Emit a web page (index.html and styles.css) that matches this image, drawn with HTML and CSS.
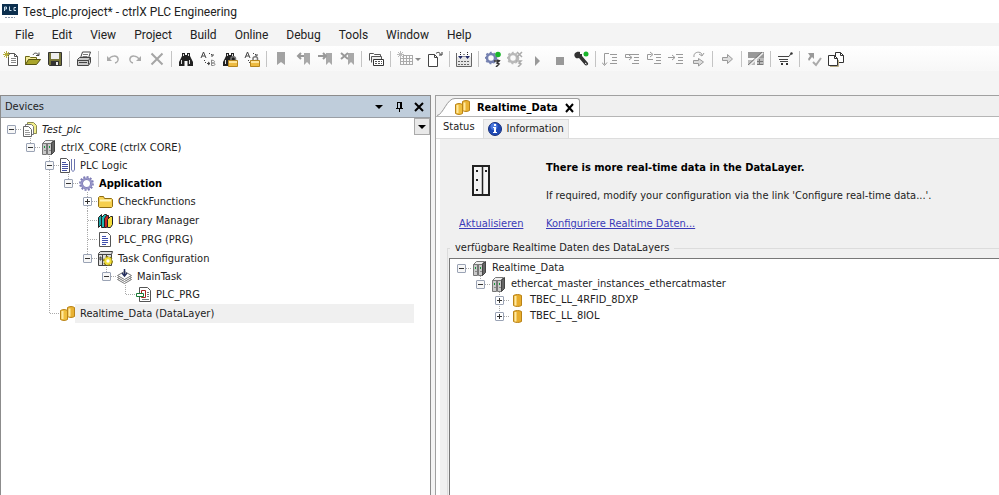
FILE: index.html
```html
<!DOCTYPE html>
<html lang="en">
<head>
  <meta charset="UTF-8"/>
  <meta name="viewport" content="width=device-width,initial-scale=1"/>
  <title>Test_plc.project* - ctrlX PLC Engineering</title>
  <link rel="stylesheet" href="styles.css">
</head>
<body>

  <!-- Icon sprite -->
  <svg class="sprite" aria-hidden="true">
    <symbol id="i-new" viewBox="0 0 16 16">
      <path d="M5.500 2.500h6l3 3v9h-9z" fill="#fff" stroke="#555"/>
      <path d="M11.500 2.500v3h3" fill="none" stroke="#555"/>
      <path d="M8 7.500h5M8 9.500h5M8 11.500h5" stroke="#888"/>
      <path d="M3.500 0v7M0 3.500h7M1 1l5 5M6 1l-5 5" stroke="#b5ad3a"/>
    </symbol>
    <symbol id="i-open" viewBox="0 0 16 16">
      <path d="M.5 13.500v-8h4l1 1h6v3" fill="#f3eb9a" stroke="#6b6717"/>
      <path d="M.5 13.500l3-5h12l-4 5z" fill="#a9a52b" stroke="#55520f"/>
      <path d="M8 4c1-2.500 4-2.500 5.500 0M14 1.500v3h-3" fill="none" stroke="#444"/>
    </symbol>
    <symbol id="i-save" viewBox="0 0 16 16">
      <path d="M1.500 1.500h13v13h-12l-1-1z" fill="#77753a" stroke="#333"/>
      <path d="M4 2h8v6H4z" fill="#eee"/>
      <path d="M4 10h8v4H4z" fill="#333"/>
      <path d="M9 11h2v3H9z" fill="#eee"/>
    </symbol>
    <symbol id="i-print" viewBox="0 0 16 16">
      <path d="M4.500 7l2-6h8l-2 6" fill="#fff" stroke="#444"/>
      <path d="M7 3.500h5M6.500 5.500h5" stroke="#777"/>
      <path d="M1.500 8.500l2-2h11v5l-2 3h-11z" fill="#c9c9c9" stroke="#444"/>
      <path d="M1.500 9.500h11v4M12.500 9.500l2-3M3 11.500h8" fill="none" stroke="#444"/>
    </symbol>
    <symbol id="i-undo" viewBox="0 0 16 16">
      <path d="M4 8c2-3.500 8-4 9-.5.500 2-1 4-3 4.500" fill="none" stroke="#aaa" stroke-width="1.500"/>
      <path d="M2 5v5h5z" fill="#aaa"/>
    </symbol>
    <symbol id="i-redo" viewBox="0 0 16 16">
      <path d="M12 8C10 4.500 4 4 3 7.500c-.5 2 1 4 3 4.500" fill="none" stroke="#aaa" stroke-width="1.500"/>
      <path d="M14 5v5H9z" fill="#aaa"/>
    </symbol>
    <symbol id="i-delete" viewBox="0 0 16 16">
      <path d="M2.500 2.500l11 11M13.500 2.500l-11 11" stroke="#a5a5a5" stroke-width="2"/>
    </symbol>
    <symbol id="i-find" viewBox="0 0 16 16">
      <path d="M4 2h3v2h2V2h3v3l3 6v4H9.500v-5h-3v5H1v-4l3-6z" fill="#222"/>
      <path d="M3 9h1v4H3zM11 9h1v4h-1zM5 3h1v2H5zM10 3h1v2h-1z" fill="#ddd"/>
    </symbol>
    <symbol id="i-replace" viewBox="0 0 16 16">
      <path d="M1 7l2.500-6L6 7M2 5h3" fill="none" stroke="#444"/>
      <path d="M11.500 9v5.500h2c2 0 2-2.500 0-2.500h-2 1.500c2 0 2-2.500 0-2.500z" fill="none" stroke="#888"/>
      <path d="M9 2.500h1M11 3.500h1M4 9.500h1M5 11.500h1M7 12.500h3M8 11l2 1.500L8 14M11 5h2V3" fill="none" stroke="#444"/>
    </symbol>
    <symbol id="i-lock" viewBox="0 0 16 16">
      <path d="M9 9V7.500c0-2.500 4.500-2.500 4.500 0V9" fill="none" stroke="#777" stroke-width="1.500"/>
      <path d="M6.500 9.500h9v6h-9z" fill="#eebb41" stroke="#b5851e"/>
      <path d="M7 10h8v2H7z" fill="#ffe59a"/>
    </symbol>
    <symbol id="i-mark" viewBox="0 0 16 16"><path d="M4 1h8v13l-4-3-4 3z" fill="#a2a2a2"/></symbol>
    <symbol id="i-mark-side" viewBox="0 0 16 16"><path d="M9 2h6v12l-3-3-3 3z" fill="#a9a9a9"/></symbol>
    <symbol id="i-windows" viewBox="0 0 16 16">
      <path d="M1.500 9.500v-7h4l1 1h6v2" fill="#fff" stroke="#555"/>
      <path d="M3.500 11.500v-6h10v3" fill="#eee" stroke="#555"/>
      <path d="M5.500 8.500h10v6h-10z" fill="#fff" stroke="#333"/>
      <path d="M7 10.500h7M7 12.500h7" stroke="#555" stroke-dasharray="2 1"/>
    </symbol>
    <symbol id="i-grid" viewBox="0 0 24 16">
      <path d="M3.500 0v7M0 3.500h7M1 1l5 5M6 1l-5 5" stroke="#bbb"/>
      <path d="M3 7.500h13M3 10.500h13M3 13.500h13M3.500 7v7M6.500 4v10M9.500 4v10M12.500 4v10M15.500 4v10M6 4.500h10" stroke="#aaa"/>
      <path d="M18 7h6l-3 3z" fill="#888"/>
    </symbol>
    <symbol id="i-page-go" viewBox="0 0 16 16">
      <path d="M1.500 3.500h6l3 3v9h-9z" fill="#fff" stroke="#444"/>
      <path d="M7.500 3.500v3h3" fill="none" stroke="#444"/>
      <path d="M9 2.500c2-2 4-1 4.500 1M15 1v3h-3" fill="none" stroke="#333"/>
    </symbol>
    <symbol id="i-build" viewBox="0 0 16 16">
      <path d="M1 6h14v9H1z" fill="#e6e6e6"/>
      <path d="M.5 2v13.500h15V2" fill="none" stroke="#666"/>
      <path d="M2 10.500h12M2 13.500h12" stroke="#666" stroke-dasharray="2 1"/>
      <path d="M4.500 1v5M11.500 1v5M8 3v4" stroke="#222" stroke-dasharray="1 1"/>
      <path d="M2 5h5l-2.500 3zM9 5h5l-2.500 3z" fill="#222a66"/>
    </symbol>
    <symbol id="i-gear" viewBox="0 0 16 16">
      <circle cx="6" cy="7" r="4" fill="none" stroke="currentColor" stroke-width="2.500"/>
      <circle cx="6" cy="7" r="5.500" fill="none" stroke="currentColor" stroke-width="1.500" stroke-dasharray="2 2"/>
    </symbol>
    <symbol id="i-login" viewBox="0 0 16 16">
      <use href="#i-gear" color="#7480b0"/>
      <circle cx="13" cy="3.500" r="2.800" fill="#19b52b"/>
      <path d="M9 10h5l-2 2 2 1-3 3M12 9l3 1" fill="none" stroke="#333" stroke-width="1.500"/>
    </symbol>
    <symbol id="i-logout" viewBox="0 0 16 16">
      <use href="#i-gear" color="#b9b9b9"/>
      <path d="M10 1l5 5M15 1l-5 5M9 10h5l-2 2 2 1-3 3" fill="none" stroke="#aaa" stroke-width="1.500"/>
    </symbol>
    <symbol id="i-play" viewBox="0 0 16 16"><path d="M6 5l5 5-5 5z" fill="#999"/></symbol>
    <symbol id="i-stop" viewBox="0 0 16 16"><path d="M5 6h8v8H5z" fill="#999"/></symbol>
    <symbol id="i-wrench" viewBox="0 0 16 16">
      <path d="M2 3l3 2 2-1V1C3 0 0 3 2 6c1 2 3 1 4 1l6 7c1 1 4 0 3-2L9 5V3" fill="#333"/>
      <path d="M12 12l1.500 1" stroke="#fff"/>
      <circle cx="13" cy="3" r="2.500" fill="#19b52b"/>
    </symbol>
    <symbol id="i-lines" viewBox="0 0 16 16">
      <path d="M8 3.500h7M10 6.500h5M10 9.500h5M8 12.500h7" stroke="currentColor"/>
    </symbol>
    <symbol id="i-step-over" viewBox="0 0 16 16">
      <use href="#i-lines"/>
      <path d="M7 2.500H2.500v11M0 11.500l2.500 3 2.500-3" fill="none" stroke="currentColor"/>
    </symbol>
    <symbol id="i-step-into" viewBox="0 0 16 16">
      <use href="#i-lines"/>
      <path d="M8 3.500H1.500v3h6M5 4l3 2.500L5 9" fill="none" stroke="currentColor"/>
    </symbol>
    <symbol id="i-step-out" viewBox="0 0 16 16">
      <use href="#i-lines"/>
      <path d="M7 8.500H1.500v-5h4M4 1l3 2.500L4 6" fill="none" stroke="currentColor"/>
    </symbol>
    <symbol id="i-run-to" viewBox="0 0 16 16">
      <use href="#i-lines"/>
      <path d="M0 6.500h7M4 4l3 2.500L4 9" fill="none" stroke="currentColor"/>
    </symbol>
    <symbol id="i-arrow" viewBox="0 0 16 16">
      <path d="M3.500 6.500h5v-3l5 4.500-5 4.500v-3h-5z" fill="#ddd" stroke="#999"/>
    </symbol>
    <symbol id="i-cycle" viewBox="0 0 16 16">
      <path d="M4 6C3 0 12 0 12 4M14 2l-2 3-3-2" fill="none" stroke="#999"/>
      <path d="M3.500 9.500h5v-2l5 3.500-5 4v-2.500h-5z" fill="#ddd" stroke="#999"/>
    </symbol>
    <symbol id="i-flow" viewBox="0 0 16 16">
      <path d="M0 1h16v6H0z" fill="#999"/>
      <path d="M0 9h7v5H0zM9 7h7v7H9z" fill="#bbb"/>
      <path d="M9 10.500h6M9 13.500h6M11.500 8v6" stroke="#777"/>
      <path d="M1 15L15 2" stroke="#eee" stroke-width="1.500"/>
      <path d="M0 14L14 1" stroke="#777"/>
    </symbol>
    <symbol id="i-cart" viewBox="0 0 16 16">
      <path d="M1 5.500h11l2-3M2 8.500h9M3 10.500h8" fill="none" stroke="#444"/>
      <circle cx="14.500" cy="2.500" r="1.200" fill="#333"/>
      <path d="M4 12h2v2H4zM9 12h2v2H9z" fill="#333"/>
    </symbol>
    <symbol id="i-check" viewBox="0 0 16 16">
      <path d="M2 2h6v6L6 6l-3 4-1-2 2-3z" fill="#999"/>
      <path d="M7 11l3 3 5-7" fill="none" stroke="#aaa" stroke-width="2"/>
    </symbol>
    <symbol id="i-copy" viewBox="0 0 16 16">
      <path d="M7.500 1.500h5l3 3v7h-8z" fill="#fff" stroke="#333"/>
      <path d="M.5 4.500h6l3 3v7h-9z" fill="#fff" stroke="#333"/>
      <path d="M6.500 4.500v3h3M12.500 1.500v3h3" fill="none" stroke="#333"/>
      <path d="M2 15.500h8.500V9" fill="none" stroke="#b9ad85"/>
    </symbol>

    <!-- Tree -->
    <symbol id="t-project" viewBox="0 0 15 15">
      <path d="M5.500.5h6l3 3v8h-9z" fill="#f1ee8c" stroke="#8a8a50"/>
      <path d="M3.500 2.500h6l2 2v8h-8z" fill="#fff" stroke="#777"/>
      <path d="M1.500 4.500h5l3 3v7h-8z" fill="#fff" stroke="#666"/>
      <path d="M3 8.500h4M3 10.500h5M3 12.500h5" stroke="#999"/>
    </symbol>
    <symbol id="t-device" viewBox="0 0 15 15">
      <path d="M1.500 3.500l3-3h8l-3 3z" fill="#eee" stroke="#777"/>
      <path d="M1.500 3.500h4v11h-4zM6.500 3.500h4v11h-4z" fill="#c9c9c9" stroke="#777"/>
      <path d="M10.500 3.500l3-3v11l-3 3z" fill="#666" stroke="#444"/>
      <path d="M3 6h1v2H3zM8 6h1v2H8z" fill="#16973a"/>
      <path d="M3 10.500h2M8 10.500h2" stroke="#888"/>
    </symbol>
    <symbol id="t-logic" viewBox="0 0 15 15">
      <path d="M.5.5h6l3 3v11h-9z" fill="#fff" stroke="#555"/>
      <path d="M2 4.500h4M2 6.500h6M2 8.500h6M2 10.500h6M2 12.500h5" stroke="#4450a0"/>
      <path d="M11.500 1v11M14.500 1v10c0 3-3 3-3 0" fill="none" stroke="#6a74b0"/>
    </symbol>
    <symbol id="t-app" viewBox="0 0 15 15">
      <circle cx="7.500" cy="7.500" r="4.800" fill="none" stroke="#7d7bb5" stroke-width="2.600"/>
      <circle cx="7.500" cy="7.500" r="6.600" fill="none" stroke="#7d7bb5" stroke-width="1.600" stroke-dasharray="2 1.450"/>
      <circle cx="7.500" cy="7.500" r="4.800" fill="none" stroke="#aaa8d6"/>
    </symbol>
    <symbol id="t-folder" viewBox="0 0 15 15">
      <path d="M.5 12.500v-9l1-1h4l1 2h7l1 1v7l-1 1h-12z" fill="#f5cf4e" stroke="#8f6d14"/>
      <path d="M2 6.500h11" stroke="#fff3b5" stroke-width="2"/>
    </symbol>
    <symbol id="t-library" viewBox="0 0 15 15">
      <path d="M.5 4.500l3-3v10l-3 3z" fill="#1ba5a8" stroke="#222"/>
      <path d="M3.500 4.500l3-3h2v10l-2 3h-3z" fill="#20b9b4" stroke="#222"/>
      <path d="M6.500 5.500l2-3h2v9l-2 3h-2z" fill="#c92828" stroke="#222"/>
      <path d="M9.500 6.500l3-3h2v8l-2 3h-3z" fill="#f3dc38" stroke="#222"/>
    </symbol>
    <symbol id="t-page" viewBox="0 0 15 15">
      <path d="M1.500.5h8l3 3v11h-11z" fill="#fff" stroke="#555"/>
      <path d="M4 4.500h4M4 6.500h6M4 8.500h6M4 10.500h6M4 12.500h4" stroke="#3f4fae"/>
    </symbol>
    <symbol id="t-taskcfg" viewBox="0 0 15 15">
      <path d="M.5 2.500l2-2h12l-1 3v11h-13z" fill="#ddd" stroke="#444"/>
      <path d="M.5 3.500h13M4.500 3v11M8.500 3v5M2 6h1v3H2z" fill="none" stroke="#444"/>
      <circle cx="10" cy="10" r="3" fill="none" stroke="#8a7a10" stroke-width="4" stroke-dasharray="2 1"/>
      <circle cx="10" cy="10" r="2.700" fill="#fff" stroke="#f2df32" stroke-width="2"/>
    </symbol>
    <symbol id="t-task" viewBox="0 0 15 15">
      <path d="M.5 10.500l7 4 7-4-7-4z" fill="#fff" stroke="#777"/>
      <path d="M.5 8.500l7 4 7-4-7-4z" fill="#fff" stroke="#777"/>
      <path d="M.5 6.500l7 4 7-4-7-4z" fill="#fff" stroke="#777"/>
      <path d="M7.500 0v6M5 4l2.500 3L10 4" fill="none" stroke="#26305e" stroke-width="1.500"/>
    </symbol>
    <symbol id="t-call" viewBox="0 0 15 15">
      <path d="M3.500.5h8l3 3v11h-11z" fill="#fff" stroke="#555"/>
      <path d="M11 5.500h2M11 7.500h2M11 9.500h2M6 12.500h7" stroke="#777"/>
      <path d="M5.500 3.500h4v7h-4z" fill="#fff" stroke="#a22"/>
      <path d="M.5 6.500h7v3h-7z" fill="#fff" stroke="#187a35"/>
    </symbol>
    <symbol id="t-data" viewBox="0 0 15 15">
      <path d="M7.500 1.500c2-1.300 5-1.300 7 0v9c-2 1.300-5 1.300-7 0z" fill="#e9b233" stroke="#b98318"/>
      <path d="M.5 4.500c2-1.300 5-1.300 7 0v9c-2 1.300-5 1.300-7 0z" fill="#f0bf3e" stroke="#b98318"/>
      <path d="M2.500 5v8M9.500 2.500v8" stroke="#ffe9a0" stroke-width="2"/>
    </symbol>
    <symbol id="t-cylinder" viewBox="0 0 15 15">
      <path d="M3.500 2.500c2-1.300 6-1.300 8 0v10c-2 1.300-6 1.300-8 0z" fill="#e8ad2c" stroke="#b98318"/>
      <path d="M5.500 3v9.500" stroke="#ffe9a0" stroke-width="2"/>
    </symbol>
  </svg>

  <header class="titlebar">
    <svg class="app-logo" viewBox="0 0 16 16" aria-hidden="true">
      <path d="M0 0h16v11H0z" fill="#0c2f4e"/>
      <path d="M2.500 7V3h2v2h-2M7.500 2.500v4h2M14 3.500h-2v3h2" fill="none" stroke="#c8dcea"/>
      <path d="M3 13.500h10" stroke="#8894a8" stroke-dasharray="2 1"/>
    </svg>
    <h1>Test_plc.project* - ctrlX PLC Engineering</h1>
  </header>

  <nav class="menubar" aria-label="Main menu">
    <button>File</button>
    <button>Edit</button>
    <button>View</button>
    <button>Project</button>
    <button>Build</button>
    <button>Online</button>
    <button>Debug</button>
    <button>Tools</button>
    <button>Window</button>
    <button>Help</button>
  </nav>

  <div class="toolbar" role="toolbar" aria-label="Standard">
    <button aria-label="New"><svg><use href="#i-new"/></svg></button>
    <button aria-label="Open"><svg><use href="#i-open"/></svg></button>
    <button aria-label="Save"><svg><use href="#i-save"/></svg></button>
    <span class="sep"></span>
    <button aria-label="Print"><svg><use href="#i-print"/></svg></button>
    <span class="sep"></span>
    <button aria-label="Undo"><svg><use href="#i-undo"/></svg></button>
    <button aria-label="Redo"><svg><use href="#i-redo"/></svg></button>
    <button aria-label="Delete"><svg><use href="#i-delete"/></svg></button>
    <span class="sep"></span>
    <button aria-label="Find"><svg><use href="#i-find"/></svg></button>
    <button aria-label="Replace"><svg><use href="#i-replace"/></svg></button>
    <button aria-label="Find in project"><svg><use href="#i-find"/><use href="#i-lock"/></svg></button>
    <button aria-label="Replace in project"><svg><use href="#i-replace"/><use href="#i-lock"/></svg></button>
    <span class="sep"></span>
    <button aria-label="Toggle bookmark"><svg><use href="#i-mark"/></svg></button>
    <button aria-label="Previous bookmark"><svg><use href="#i-mark-side"/><path d="M6 2L3 5l3 3M3 5h6" fill="none" stroke="#999" stroke-width="2"/></svg></button>
    <button aria-label="Next bookmark"><svg><use href="#i-mark-side"/><path d="M6 2l3 3-3 3M1 5h7" fill="none" stroke="#999" stroke-width="2"/></svg></button>
    <button aria-label="Clear bookmarks"><svg><use href="#i-mark-side"/><path d="M2 2l7 6M9 2L2 8" stroke="#999" stroke-width="2"/></svg></button>
    <span class="sep"></span>
    <button aria-label="Windows"><svg><use href="#i-windows"/></svg></button>
    <span class="sep"></span>
    <button class="wide" aria-label="Add object"><svg><use href="#i-grid"/></svg></button>
    <button aria-label="Edit object"><svg><use href="#i-page-go"/></svg></button>
    <span class="sep"></span>
    <button aria-label="Build"><svg><use href="#i-build"/></svg></button>
    <span class="sep"></span>
    <button aria-label="Login"><svg><use href="#i-login"/></svg></button>
    <button aria-label="Logout"><svg><use href="#i-logout"/></svg></button>
    <button aria-label="Start"><svg><use href="#i-play"/></svg></button>
    <button aria-label="Stop"><svg><use href="#i-stop"/></svg></button>
    <button aria-label="Configuration"><svg><use href="#i-wrench"/></svg></button>
    <span class="sep"></span>
    <button aria-label="Step over"><svg><use href="#i-step-over"/></svg></button>
    <button aria-label="Step into"><svg><use href="#i-step-into"/></svg></button>
    <button aria-label="Step out"><svg><use href="#i-step-out"/></svg></button>
    <button aria-label="Run to cursor"><svg><use href="#i-run-to"/></svg></button>
    <button aria-label="Single cycle"><svg><use href="#i-cycle"/></svg></button>
    <span class="sep"></span>
    <button aria-label="Show next statement"><svg><use href="#i-arrow"/></svg></button>
    <span class="sep"></span>
    <button aria-label="Flow control"><svg><use href="#i-flow"/></svg></button>
    <span class="sep"></span>
    <button aria-label="Store"><svg><use href="#i-cart"/></svg></button>
    <span class="sep"></span>
    <button aria-label="Check"><svg><use href="#i-check"/></svg></button>
    <button aria-label="Compare"><svg><use href="#i-copy"/></svg></button>
  </div>

  <main class="workspace">

    <!-- Devices -->
    <section class="devices">
      <header class="panel-head">
        <h2>Devices</h2>
        <button aria-label="Options"><svg viewBox="0 0 10 10"><path d="M1 3h8L5 7z"/></svg></button>
        <button aria-label="Pin"><svg viewBox="0 0 10 10"><path d="M3 0h5v6h1v1H6v3H5V7H2V6h1zM4 1v5h2V1z"/></svg></button>
        <button aria-label="Close"><svg viewBox="0 0 10 10"><path d="M1 1l8 8M9 1L1 9" stroke="#000" stroke-width="2"/></svg></button>
      </header>
      <div class="devices-body">
        <ul class="tree">
          <li>
            <div class="row"><button class="toggle" aria-label="Collapse"></button><svg><use href="#t-project"/></svg><em>Test_plc</em></div>
            <ul>
              <li>
                <div class="row"><button class="toggle" aria-label="Collapse"></button><svg><use href="#t-device"/></svg><span>ctrlX_CORE (ctrlX CORE)</span></div>
                <ul>
                  <li>
                    <div class="row"><button class="toggle" aria-label="Collapse"></button><svg><use href="#t-logic"/></svg><span>PLC Logic</span></div>
                    <ul>
                      <li>
                        <div class="row"><button class="toggle" aria-label="Collapse"></button><svg><use href="#t-app"/></svg><strong>Application</strong></div>
                        <ul>
                          <li><div class="row"><button class="toggle closed" aria-label="Expand"></button><svg><use href="#t-folder"/></svg><span>CheckFunctions</span></div></li>
                          <li><div class="row leaf"><svg><use href="#t-library"/></svg><span>Library Manager</span></div></li>
                          <li><div class="row leaf"><svg><use href="#t-page"/></svg><span>PLC_PRG (PRG)</span></div></li>
                          <li>
                            <div class="row"><button class="toggle" aria-label="Collapse"></button><svg><use href="#t-taskcfg"/></svg><span>Task Configuration</span></div>
                            <ul>
                              <li>
                                <div class="row"><button class="toggle" aria-label="Collapse"></button><svg><use href="#t-task"/></svg><span>MainTask</span></div>
                                <ul>
                                  <li><div class="row leaf"><svg><use href="#t-call"/></svg><span>PLC_PRG</span></div></li>
                                </ul>
                              </li>
                            </ul>
                          </li>
                        </ul>
                      </li>
                    </ul>
                  </li>
                  <li><div class="row leaf selected"><svg><use href="#t-data"/></svg><span>Realtime_Data (DataLayer)</span></div></li>
                </ul>
              </li>
            </ul>
          </li>
        </ul>
        <button class="drop" aria-label="Show menu"><svg viewBox="0 0 10 10"><path d="M1 3h8L5 7z"/></svg></button>
      </div>
    </section>

    <!-- Editor -->
    <section class="editor">
      <div class="doc-tabs">
        <svg class="slant" viewBox="0 0 18 18" aria-hidden="true"><path d="M0 18C6 17 10 0 18 .5V18z" fill="#fff"/><path d="M0 17.500C6 17 10 0 18 .5" fill="none" stroke="#999"/></svg>
        <div class="doc-tab">
          <svg class="doc-icon"><use href="#t-data"/></svg>
          <span>Realtime_Data</span>
          <button aria-label="Close tab"><svg viewBox="0 0 10 10"><path d="M1 1l7 8M8 1L1 9" stroke="#000" stroke-width="2"/></svg></button>
        </div>
      </div>

      <div class="page-tabs" role="tablist">
        <button class="page-tab active" role="tab" aria-selected="true">Status</button>
        <button class="page-tab" role="tab" aria-selected="false">
          <svg viewBox="0 0 14 14"><circle cx="7" cy="7" r="6.500" fill="#1f49b5" stroke="#173079"/><circle cx="6" cy="4.500" r="3.500" fill="#4a78dd"/><path d="M6 2h2v2H6zM5 5h3v5h1v1H5v-1h1V6H5z" fill="#fff"/></svg>
          Information
        </button>
      </div>

      <div class="page">
        <div class="info">
          <svg class="module" viewBox="0 0 18 31" aria-hidden="true">
            <path d="M1 1h16v29H1z" fill="#f4f4f4" stroke="#222" stroke-width="2"/>
            <path d="M10.500 1v29" stroke="#222" stroke-width="1.500"/>
            <path d="M4 5h2v2H4zM4 14h2v2H4zM4 24h2v2H4zM13 5h2v2h-2z" fill="#222"/>
          </svg>
          <div class="message">
            <strong>There is more real-time data in the DataLayer.</strong>
            <p>If required, modify your configuration via the link 'Configure real-time data...'.</p>
          </div>
          <a href="#refresh">Aktualisieren</a>
          <a href="#configure">Konfiguriere Realtime Daten...</a>
        </div>

        <fieldset class="available">
          <legend>verfügbare Realtime Daten des DataLayers</legend>
          <ul class="tree compact">
            <li>
              <div class="row"><button class="toggle" aria-label="Collapse"></button><svg><use href="#t-device"/></svg><span>Realtime_Data</span></div>
              <ul>
                <li>
                  <div class="row"><button class="toggle" aria-label="Collapse"></button><svg><use href="#t-device"/></svg><span>ethercat_master_instances_ethercatmaster</span></div>
                  <ul>
                    <li><div class="row"><button class="toggle closed" aria-label="Expand"></button><svg><use href="#t-cylinder"/></svg><span>TBEC_LL_4RFID_8DXP</span></div></li>
                    <li><div class="row"><button class="toggle closed" aria-label="Expand"></button><svg><use href="#t-cylinder"/></svg><span>TBEC_LL_8IOL</span></div></li>
                  </ul>
                </li>
              </ul>
            </li>
          </ul>
        </fieldset>
      </div>
    </section>
  </main>

</body>
</html>
```
FILE: styles.css
```css
:root {
  --ui-font: Roboto, "Open Sans", sans-serif;
  --tree-font: "DejaVu Sans Condensed", "DejaVu Sans", sans-serif;
  --face: #f0f0f0;
  --strip: #f4f4f4;
  --line: #a0a0a0;
  --text: #222;
}
* { margin:0; padding:0; box-sizing:border-box }
html, body { height:100% }
body {
  display:flex; flex-direction:column;
  overflow:hidden;
  background: var(--strip);
  color: var(--text);
  font: 11px/16px var(--tree-font);
}
button { border:none; background:none; font:inherit; color:inherit }
svg { display:block; flex:none }
ul { list-style:none }
.sprite { position:absolute; width:0; height:0 }

/* Title bar */
.titlebar {
  display:flex; align-items:center; gap:5px;
  height:23px; padding-left:2px;
  background:#fff;
}
.app-logo { width:16px; height:16px }
.titlebar h1 { font: 400 12px/16px var(--ui-font) }

/* Menu */
.menubar {
  display:flex; align-items:center; gap:18px;
  height:23px; padding-left:15px;
  font: 12px/16px var(--ui-font);
}

/* Toolbar */
.toolbar {
  display:flex; align-items:center; gap:6px;
  height:25px; padding-left:3px;
  background: linear-gradient(#fff, #f7f7f7);
}
.toolbar button { flex:none; width:16px; height:16px; color:#999 }
.toolbar svg { width:16px; height:16px }
.toolbar .wide, .toolbar .wide svg { width:24px }
.sep { flex:none; width:1px; height:16px; background:#c4c4c4 }

/* Workspace */
.workspace {
  flex:1; min-height:0;
  display:flex; gap:4px;
  margin-top:24px;
}
.devices {
  display:flex; flex-direction:column;
  width:431px;
  border:1px solid #8c8c8c; border-bottom:none;
  background:#fff;
}
.panel-head {
  display:flex; align-items:center; gap:10px;
  height:22px; padding:0 6px 0 4px;
  background:#bfcddb;
  border-bottom:1px solid #9a9fa5;
}
.panel-head h2 { flex:1; font: 400 11px/16px var(--tree-font) }
.panel-head svg, .drop svg { width:10px; height:10px }
.devices-body { display:flex; align-items:flex-start }
.devices-body .tree { flex:1; padding-top:2px; padding-left:6px }
.drop {
  display:flex; align-items:center; justify-content:center;
  width:16px; height:17px;
  background:#e9e9e9; border:1px solid #aaa;
}

/* Tree */
.tree li {
  background: repeating-linear-gradient(#aaa 0 1px, transparent 1px 2px) 4px 0 / 1px 100% no-repeat;
}
.tree li:last-child { background-size:1px 10px }
.tree > li:last-child { background:none }
.tree li ul { margin-top:-1px; padding-left:19px }
.row { display:flex; align-items:center; line-height:19px; white-space:nowrap }
.row svg { width:15px; height:15px; margin-right:5px }
.row::before {
  content:""; order:1;
  width:6px; height:1px;
  background: repeating-linear-gradient(90deg, #aaa 0 1px, transparent 1px 2px);
}
.row > * { order:2 }
.row .toggle { order:0 }
.row.leaf::before { width:10px; margin-left:5px }
.toggle {
  width:9px; height:9px;
  border:1px solid #9aa3b5; border-radius:1px;
  background: linear-gradient(#333, #333) center / 5px 1px no-repeat, #f7f7f7;
}
.toggle.closed {
  background:
    linear-gradient(#333, #333) center / 5px 1px no-repeat,
    linear-gradient(#333, #333) center / 1px 5px no-repeat, #fff;
}
.row strong { font-weight:700; color:#000 }
.selected svg { margin-right:0 }
.selected span { flex:1; padding-left:5px; background:var(--face) }
.compact .row { line-height:16px }
.compact li ul { margin-top:0 }
.compact li:last-child { background-size:1px 8px }

/* Editor */
.editor {
  flex:1; min-width:0;
  display:flex; flex-direction:column;
  border-top:1px solid var(--line);
  border-left:1px solid var(--line);
  background:#fff;
}
.doc-tabs {
  display:flex; align-items:flex-end;
  height:21px; padding-left:1px;
  background:var(--face);
  border-bottom:1px solid #b5b5b5;
}
.slant { width:18px; height:18px }
.doc-tab {
  display:flex; align-items:center; gap:7px;
  height:18px; padding-right:4px;
  background:#fff;
  border-top:1px solid var(--line); border-right:1px solid var(--line);
  border-radius:0 3px 0 0;
  font: 700 11px/16px var(--tree-font);
  color:#000;
}
.doc-tab svg { width:10px; height:10px }
.doc-tab .doc-icon { width:15px; height:15px }
.page-tabs {
  display:flex; align-items:flex-end;
  height:22px; padding-left:3px;
  border-bottom:1px solid #ddd;
}
.page-tab { display:flex; align-items:center; gap:5px; height:21px; padding:0 4px }
.page-tab.active { padding:0 8px 2px 4px }
.page-tab:not(.active) { height:19px; background:var(--face); border:1px solid #ddd; border-bottom:none }
.page-tab svg { width:14px; height:14px }

.page {
  flex:1;
  display:flex; flex-direction:column;
  margin-left:4px; padding-left:7px;
  background:var(--face);
}
.info {
  display:grid; grid-template-columns: 65px 1fr;
  column-gap:22px; row-gap:12px;
  padding:21px 0 0 12px;
}
.module { width:18px; height:31px; margin:5px 0 0 13px }
.message strong { display:block; color:#000; line-height:16px }
.message p { margin-top:12px }
.info a { justify-self:start; color:#3a3ab8 }

.available {
  flex:1;
  display:flex; flex-direction:column;
  margin-top:8px; min-width:0; padding:2px 0 0 1px;
  border:1px solid #dcdcdc; border-width:1px 0 0 1px;
}
.available legend { padding:0 5px; margin-left:1px }
.available .tree {
  flex:1;
  padding:1px 0 0 7px;
  background:#fff;
  border:1px solid #777; border-width:1px 0 0 1px;
}
```
